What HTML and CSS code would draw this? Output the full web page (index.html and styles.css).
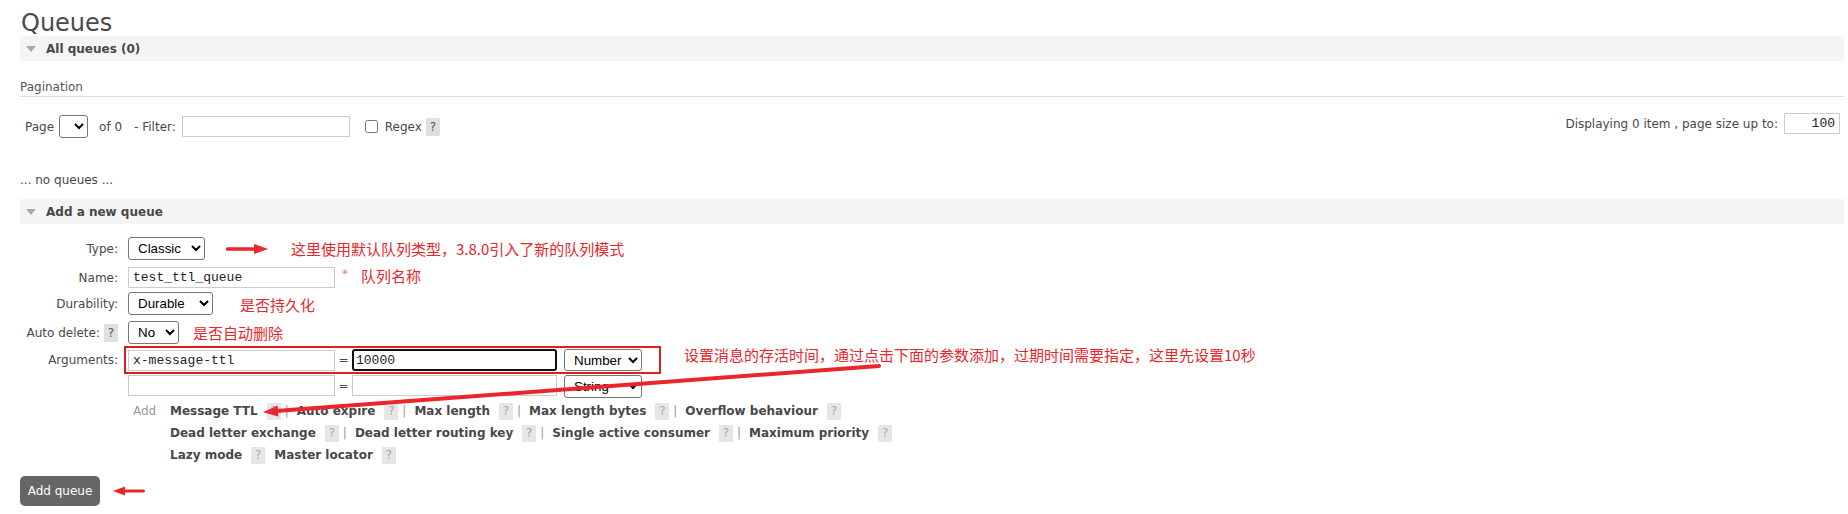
FILE: index.html
```html
<!DOCTYPE html>
<html lang="zh-CN">
<head>
<meta charset="utf-8">
<title>Queues</title>
<link rel="stylesheet" href="styles.css">
</head>
<body>
<div class="main">
  <h1 class="title">Queues</h1>

  <section class="section">
    <h2 class="band"><span class="tri"></span>All queues (0)</h2>
    <h3 class="pag-title">Pagination</h3>
    <div class="pag-row">
      <div class="pag-left">
        <span>Page</span>
        <select class="sel sel-page"></select>
        <span class="of">of 0</span>
        <span class="flabel">- Filter:</span>
        <input class="txt filter" type="text">
        <input class="chk" type="checkbox">
        <span class="regex">Regex</span>
        <span class="help dark">?</span>
      </div>
      <div class="pag-right">
        <span>Displaying 0 item , page size up to:</span>
        <input class="txt pagesize" type="text" value="100">
      </div>
    </div>
    <p class="none">... no queues ...</p>
  </section>

  <section class="section">
    <h2 class="band band-add"><span class="tri"></span>Add a new queue</h2>
    <div class="form">
      <div class="row r-type">
        <label class="lbl">Type:</label>
        <select class="sel sel-type"><option>Classic</option></select>
        <svg class="arr-type" width="42" height="12" viewBox="0 0 42 12"><path d="M1.5 6 L30 6" stroke="#e8262c" stroke-width="3.5" stroke-linecap="round"/><path d="M28 1 L42 6 L28 11 Z" fill="#e8262c"/></svg>
        <span class="note n-type">这里使用默认队列类型，3.8.0引入了新的队列模式</span>
      </div>
      <div class="row r-name">
        <label class="lbl">Name:</label>
        <input class="txt name" type="text" value="test_ttl_queue">
        <span class="star">*</span>
        <span class="note n-name">队列名称</span>
      </div>
      <div class="row r-dur">
        <label class="lbl">Durability:</label>
        <select class="sel sel-dur"><option>Durable</option></select>
        <span class="note n-dur">是否持久化</span>
      </div>
      <div class="row r-auto">
        <label class="lbl lbl-auto">Auto delete:<span class="help dark">?</span></label>
        <select class="sel sel-auto"><option>No</option></select>
        <span class="note n-auto">是否自动删除</span>
      </div>
      <div class="row r-args">
        <label class="lbl lbl-args">Arguments:</label>
        <div class="args">
          <div class="arg-line first">
            <input class="txt key" type="text" value="x-message-ttl">
            <span class="eq">=</span>
            <input class="txt val focused" type="text" value="10000">
            <select class="sel sel-arg"><option>Number</option></select>
            <span class="note n-args">设置消息的存活时间，通过点击下面的参数添加，过期时间需要指定，这里先设置10秒</span>
            <span class="redbox"></span>
          </div>
          <div class="arg-line second">
            <input class="txt key" type="text">
            <span class="eq">=</span>
            <input class="txt val" type="text">
            <select class="sel sel-arg sel-arg2"><option>String</option></select>
          </div>
          <div class="add-links">
            <span class="add-label">Add</span>
            <div class="links">
              <div class="lline">
                <span class="argl">Message TTL</span><span class="help light">?</span><span class="sep">|</span>
                <span class="argl">Auto expire</span><span class="help light">?</span><span class="sep">|</span>
                <span class="argl">Max length</span><span class="help light">?</span><span class="sep">|</span>
                <span class="argl">Max length bytes</span><span class="help light">?</span><span class="sep">|</span>
                <span class="argl">Overflow behaviour</span><span class="help light">?</span>
              </div>
              <div class="lline">
                <span class="argl">Dead letter exchange</span><span class="help light">?</span><span class="sep">|</span>
                <span class="argl">Dead letter routing key</span><span class="help light">?</span><span class="sep">|</span>
                <span class="argl">Single active consumer</span><span class="help light">?</span><span class="sep">|</span>
                <span class="argl">Maximum priority</span><span class="help light">?</span>
              </div>
              <div class="lline">
                <span class="argl">Lazy mode</span><span class="help light">?</span>
                <span class="argl spaced">Master locator</span><span class="help light">?</span>
              </div>
            </div>
          </div>
        </div>
      </div>
      <div class="submit-row">
        <button class="btn" type="button">Add queue</button>
        <svg class="arr-btn" width="32" height="10" viewBox="0 0 32 10"><path d="M10 5 L30.5 5" stroke="#e8262c" stroke-width="3" stroke-linecap="round"/><path d="M0 5 L12 0.5 L12 9.5 Z" fill="#e8262c"/></svg>
      </div>
    </div>
  </section>

  <svg class="overlay" width="1848" height="514" viewBox="0 0 1848 514">
    <path d="M879 366 L276 411" stroke="#e8262c" stroke-width="4" stroke-linecap="round"/>
    <path d="M263 412.2 L277.6 405.6 L278.4 416.4 Z" fill="#e8262c"/>
  </svg>
</div>
</body>
</html>
```

FILE: styles.css
```css
* { box-sizing: border-box; }
html, body { margin: 0; padding: 0; background: #fff; }
body {
  font: 12px/16px "DejaVu Sans", Verdana, sans-serif;
  color: #484848;
}
.main {
  position: relative;
  width: 1848px;
  height: 514px;
  overflow: hidden;
  padding: 0 4px 0 20px;
}
.title {
  margin: 11px 0 0 1px;
  font-size: 24px;
  line-height: 25px;
  font-weight: normal;
  color: #4a4a4a;
}
.band {
  margin: 0;
  height: 25px;
  background: #f5f5f5;
  display: flex;
  align-items: center;
  padding-left: 6px;
  font-size: 12px;
  font-weight: bold;
  color: #484848;
}
.tri {
  width: 0;
  height: 0;
  border-left: 5px solid transparent;
  border-right: 5px solid transparent;
  border-top: 6px solid #aaa;
  margin-right: 10px;
}
.pag-title {
  margin: 18px 0 0 0;
  font-size: 12px;
  font-weight: normal;
  line-height: 16px;
  padding-bottom: 1px;
  border-bottom: 1px solid #ddd;
  color: #555;
}
.pag-row {
  margin-top: 18px;
  height: 23px;
  display: flex;
  justify-content: space-between;
  align-items: center;
  padding: 0 4px 0 5px;
}
.pag-left { display: flex; align-items: center; }
.pag-right {
  align-self: flex-start;
  margin-top: -2px;
  display: flex;
  align-items: center;
}
.sel {
  font: 13.33px "Liberation Sans", Arial, sans-serif;
  color: #000;
  background: #fff;
  border: 1px solid #767676;
  border-radius: 3px;
  padding: 0 2px 0 5px;
  flex: none;
}
.sel-page { width: 29px; height: 23px; margin-left: 5px; }
.of { margin-left: 11px; }
.flabel { margin-left: 12px; }
.txt {
  border: 1px solid #ccc;
  height: 21px;
  padding: 0 4px;
  font: 13px "Liberation Mono", "Courier New", monospace;
  color: #222;
  background: #fff;
  outline: none;
  flex: none;
}
.filter { width: 168px; margin-left: 6px; }
.chk { width: 13px; height: 13px; margin: 0 0 0 15px; }
.regex { margin-left: 7px; }
.help {
  display: inline-flex;
  align-items: center;
  justify-content: center;
  width: 14px;
  height: 18px;
  font-size: 12px;
  font-weight: normal;
  flex: none;
}
.help.dark { background: #e0e0e0; color: #555; margin-left: 4px; }
.help.light { background: #e6e6e6; color: #aaa; margin-left: 9px; height: 17px; }
.pagesize { width: 56px; margin-left: 6px; text-align: right; padding-right: 4px; }
.none { margin: 34px 0 0 0; line-height: 16px; }
.band-add { margin-top: 11px; }

.form { display: flex; flex-direction: column; }
.row { display: flex; align-items: center; }
.lbl {
  width: 98px;
  margin-right: 10px;
  text-align: right;
  flex: none;
  color: #484848;
}
.lbl-auto { display: flex; justify-content: flex-end; align-items: center; }
.r-type { margin-top: 13px; height: 23px; }
.r-name { margin-top: 7px; height: 21px; }
.r-dur { margin-top: 4px; height: 23px; }
.r-auto { margin-top: 6px; height: 23px; }
.r-args { margin-top: 5px; align-items: flex-start; }
.lbl-args { line-height: 22px; }
.sel-type { width: 77px; height: 23px; }
.sel-dur { width: 85px; height: 23px; }
.sel-auto { width: 51px; height: 23px; }
.name { width: 207px; }
.star { margin-left: 7px; color: #ee7777; font-size: 12px; align-self: flex-start; margin-top: -1px; }
.note {
  font: 15px/20px "Noto Sans CJK SC", "Noto Sans", sans-serif;
  color: #e8262c;
  white-space: nowrap;
}
.arr-type { margin-left: 21px; flex: none; }
.n-type { margin-left: 23px; }
.n-name { margin-left: 13px; margin-top: -4px; }
.n-dur { margin-left: 27px; margin-top: 2px; }
.n-auto { margin-left: 14px; }

.args { display: flex; flex-direction: column; }
.arg-line { display: flex; align-items: center; position: relative; height: 22px; }
.arg-line.second { margin-top: 4px; height: 21px; }
.key { width: 207px; }
.eq { width: 17px; text-align: center; flex: none; }
.val { width: 205px; }
.val.focused { border: 2px solid #111; border-radius: 3px; height: 22px; padding-left: 2px; }
.sel-arg { width: 78px; height: 22px; margin-left: 7px; }
.sel-arg2 { height: 23px; align-self: flex-start; }
.n-args { margin-left: 42px; align-self: flex-start; margin-top: -4px; }
.redbox {
  position: absolute;
  left: -4px;
  top: -3px;
  width: 537px;
  height: 28px;
  border: 2px solid #e01b22;
  pointer-events: none;
}
.add-links { display: flex; margin-top: 4px; }
.add-label { width: 42px; padding-left: 5px; color: #999; line-height: 22px; flex: none; }
.links { display: flex; flex-direction: column; }
.lline { display: flex; align-items: center; height: 22px; white-space: nowrap; }
.argl { font-weight: bold; color: #484848; }
.argl.spaced { margin-left: 9px; }
.sep { color: #999; margin: 0 8px 0 4px; }

.submit-row { display: flex; align-items: center; margin-top: 10px; }
.btn {
  width: 80px;
  height: 30px;
  background: #666;
  color: #fff;
  border: none;
  border-radius: 5px;
  font: 12px "DejaVu Sans", Verdana, sans-serif;
  padding: 0;
}
.arr-btn { margin-left: 13px; }
.overlay {
  position: absolute;
  left: 0;
  top: 0;
  pointer-events: none;
}
```
